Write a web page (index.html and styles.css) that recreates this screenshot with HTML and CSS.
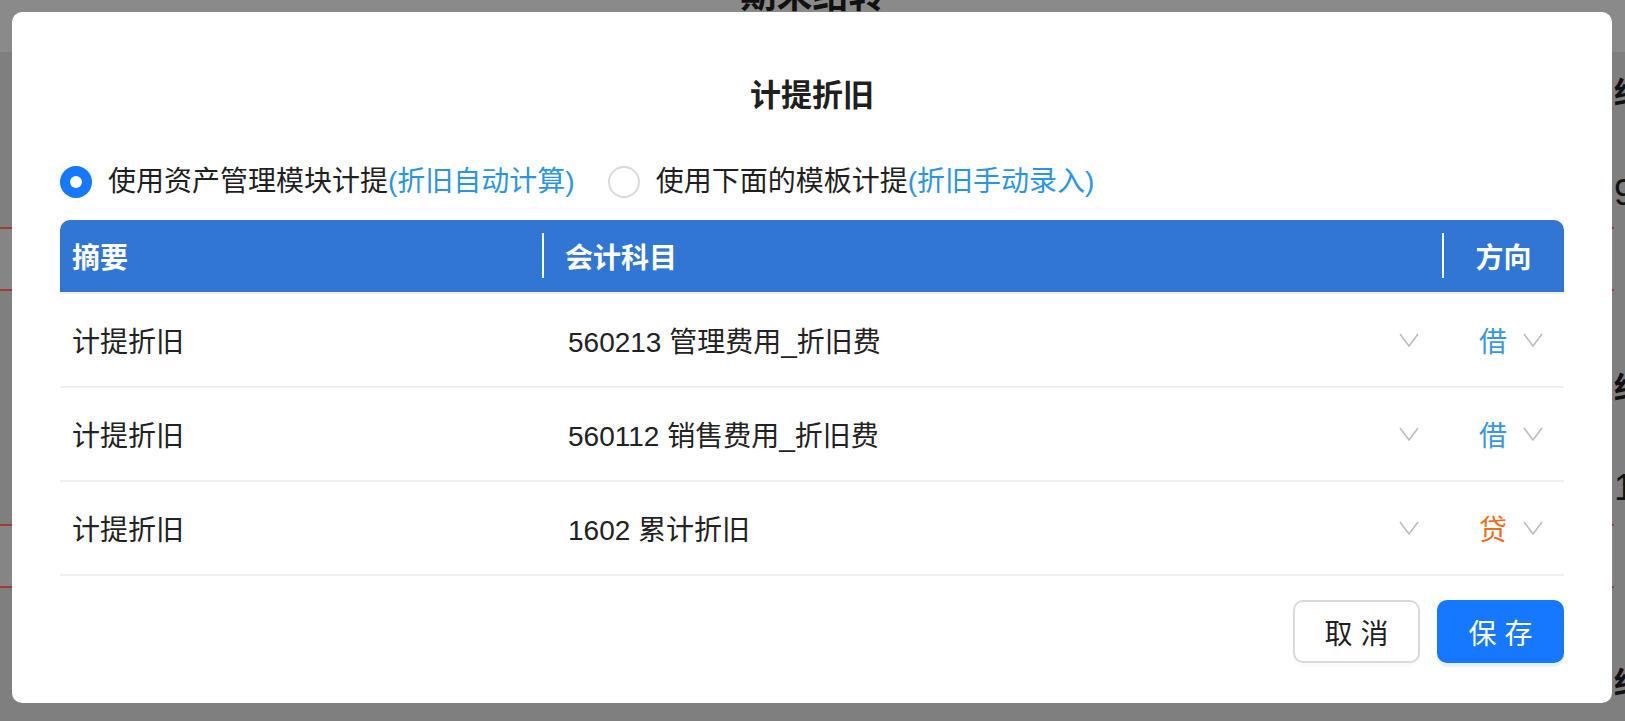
FILE: index.html
```html
<!DOCTYPE html>
<html lang="zh-CN">
<head>
    <meta charset="UTF-8">
    <meta name="viewport" content="width=device-width, initial-scale=1.0">
    <title>计提折旧</title>
    <link rel="stylesheet" href="styles.css">
</head>
<body>
    <div class="page">
        <div class="page-head">
            <h2>期末结转</h2>
        </div>
        <div class="page-body">
            <div class="page-main">
                <div class="page-card"></div>
                <div class="page-card"></div>
            </div>
            <div class="page-side">
                <div class="side-item"><b>结</b><span>9</span></div>
                <div class="side-item"><b>结</b><span>1</span></div>
                <div class="side-item"><b>结</b></div>
            </div>
        </div>
    </div>

    <div class="mask">
        <div class="modal">
            <div class="modal-title">计提折旧</div>

            <div class="radio-group">
                <label class="radio checked">
                    <span class="radio-dot"></span>
                    <span class="radio-text">使用资产管理模块计提<em>(折旧自动计算)</em></span>
                </label>
                <label class="radio">
                    <span class="radio-dot"></span>
                    <span class="radio-text">使用下面的模板计提<em>(折旧手动录入)</em></span>
                </label>
            </div>

            <div class="voucher-table">
                <div class="thead">
                    <div class="th col-summary">摘要</div>
                    <div class="th col-subject">会计科目</div>
                    <div class="th col-dir">方向</div>
                </div>
                <div class="tr">
                    <div class="td col-summary">计提折旧</div>
                    <div class="td col-subject">
                        <span>560213 管理费用_折旧费</span>
                        <svg class="chevron" viewBox="0 0 20 14"><polyline points="1,1 10,13 19,1"/></svg>
                    </div>
                    <div class="td col-dir">
                        <span class="dir-debit">借</span>
                        <svg class="chevron" viewBox="0 0 20 14"><polyline points="1,1 10,13 19,1"/></svg>
                    </div>
                </div>
                <div class="tr">
                    <div class="td col-summary">计提折旧</div>
                    <div class="td col-subject">
                        <span>560112 销售费用_折旧费</span>
                        <svg class="chevron" viewBox="0 0 20 14"><polyline points="1,1 10,13 19,1"/></svg>
                    </div>
                    <div class="td col-dir">
                        <span class="dir-debit">借</span>
                        <svg class="chevron" viewBox="0 0 20 14"><polyline points="1,1 10,13 19,1"/></svg>
                    </div>
                </div>
                <div class="tr">
                    <div class="td col-summary">计提折旧</div>
                    <div class="td col-subject">
                        <span>1602 累计折旧</span>
                        <svg class="chevron" viewBox="0 0 20 14"><polyline points="1,1 10,13 19,1"/></svg>
                    </div>
                    <div class="td col-dir">
                        <span class="dir-credit">贷</span>
                        <svg class="chevron" viewBox="0 0 20 14"><polyline points="1,1 10,13 19,1"/></svg>
                    </div>
                </div>
            </div>

            <div class="modal-footer">
                <button class="btn">取消</button>
                <button class="btn btn-primary">保存</button>
            </div>
        </div>
    </div>
</body>
</html>
```

FILE: styles.css
```css
html, body {
    margin: 0;
    padding: 0;
    height: 100%;
    overflow: hidden;
}
body {
    font-family: "Liberation Sans", "Noto Sans CJK SC", sans-serif;
    background: #7f7f7f;
    color: #222;
}

/* page behind the mask */
.page {
    height: 100%;
    display: flex;
    flex-direction: column;
}
.page-head {
    height: 52px;
    background: #8a8a8a;
    display: flex;
    justify-content: center;
    overflow: hidden;
}
.page-head h2 {
    margin: -26px 0 0 0;
    font-size: 36px;
    line-height: 44px;
    color: #111;
}
.page-body {
    flex: 1;
    display: flex;
}
.page-main {
    flex: 1;
    display: flex;
    flex-direction: column;
    gap: 233px;
    padding-top: 175px;
}
.page-card {
    height: 60px;
    border-top: 2px solid #a33a3a;
    border-bottom: 2px solid #a33a3a;
    background: #858585;
}
.page-side {
    width: 11px;
    display: flex;
    flex-direction: column;
    gap: 165px;
    padding-top: 26px;
    overflow: hidden;
}
.side-item {
    display: flex;
    flex-direction: column;
    gap: 70px;
    font-size: 30px;
    line-height: 30px;
    color: #111;
}
.side-item span {
    font-size: 36px;
}

/* modal */
.mask {
    position: fixed;
    inset: 0;
    display: flex;
    align-items: flex-start;
    padding: 12px 0 0 12px;
}
.modal {
    width: 1600px;
    box-sizing: border-box;
    background: #fff;
    border-radius: 10px;
    padding: 60px 48px 40px;
    display: flex;
    flex-direction: column;
}
.modal-title {
    text-align: center;
    font-size: 31px;
    font-weight: bold;
    line-height: 48px;
    color: #1f1f1f;
}

.radio-group {
    display: flex;
    align-items: center;
    height: 48px;
    margin: 38px 0 14px;
    font-size: 28px;
}
.radio {
    display: flex;
    align-items: center;
    margin-right: 33px;
}
.radio-dot {
    width: 32px;
    height: 32px;
    box-sizing: border-box;
    border: 2px solid #d9d9d9;
    border-radius: 50%;
    margin-right: 16px;
    display: flex;
    align-items: center;
    justify-content: center;
}
.radio.checked .radio-dot {
    border: none;
    background: #1677ff;
}
.radio.checked .radio-dot::after {
    content: "";
    width: 12px;
    height: 12px;
    border-radius: 50%;
    background: #fff;
}
.radio-text {
    color: #1f1f1f;
    line-height: 40px;
}
.radio-text em {
    font-style: normal;
    color: #2c95e3;
}

/* voucher table */
.voucher-table {
    display: flex;
    flex-direction: column;
}
.thead, .tr {
    display: grid;
    grid-template-columns: 483px 1fr 121px;
}
.thead {
    height: 72px;
    background: #3176d2;
    border-radius: 10px 10px 0 0;
    border-bottom: 2px solid #f0f0f0;
    color: #fff;
    font-size: 28px;
    font-weight: bold;
}
.th {
    display: flex;
    align-items: center;
    position: relative;
}
.th.col-summary {
    padding-left: 12px;
}
.th.col-subject {
    padding-left: 22px;
}
.th.col-dir {
    justify-content: center;
}
.th.col-subject::before,
.th.col-dir::before {
    content: "";
    position: absolute;
    left: -1px;
    top: 13px;
    width: 2px;
    height: 45px;
    background: #fff;
}
.tr {
    height: 92px;
    border-bottom: 2px solid #f0f0f0;
    font-size: 28px;
}
.td {
    display: flex;
    align-items: center;
}
.td.col-summary {
    padding-left: 12px;
}
.td.col-subject {
    justify-content: space-between;
    padding: 0 24px 0 25px;
}
.td.col-dir {
    justify-content: flex-end;
    gap: 16px;
    padding-right: 21px;
}
.chevron {
    width: 20px;
    height: 14px;
    fill: none;
    stroke: #bcbcbc;
    stroke-width: 1.6;
}
.dir-debit {
    color: #3a98e2;
}
.dir-credit {
    color: #ee6d1f;
}

.modal-footer {
    display: flex;
    justify-content: flex-end;
    gap: 17px;
    margin-top: 24px;
}
.btn {
    width: 127px;
    height: 63px;
    box-sizing: border-box;
    border: 2px solid #d9d9d9;
    border-radius: 10px;
    background: #fff;
    color: #1f1f1f;
    font-family: inherit;
    font-size: 28px;
    letter-spacing: 8px;
    text-indent: 8px;
    box-shadow: 0 4px 0 rgba(0, 0, 0, 0.02);
    padding: 0;
}
.btn-primary {
    background: #1677ff;
    border-color: #1677ff;
    color: #fff;
    box-shadow: 0 4px 0 rgba(5, 145, 255, 0.1);
}
```
